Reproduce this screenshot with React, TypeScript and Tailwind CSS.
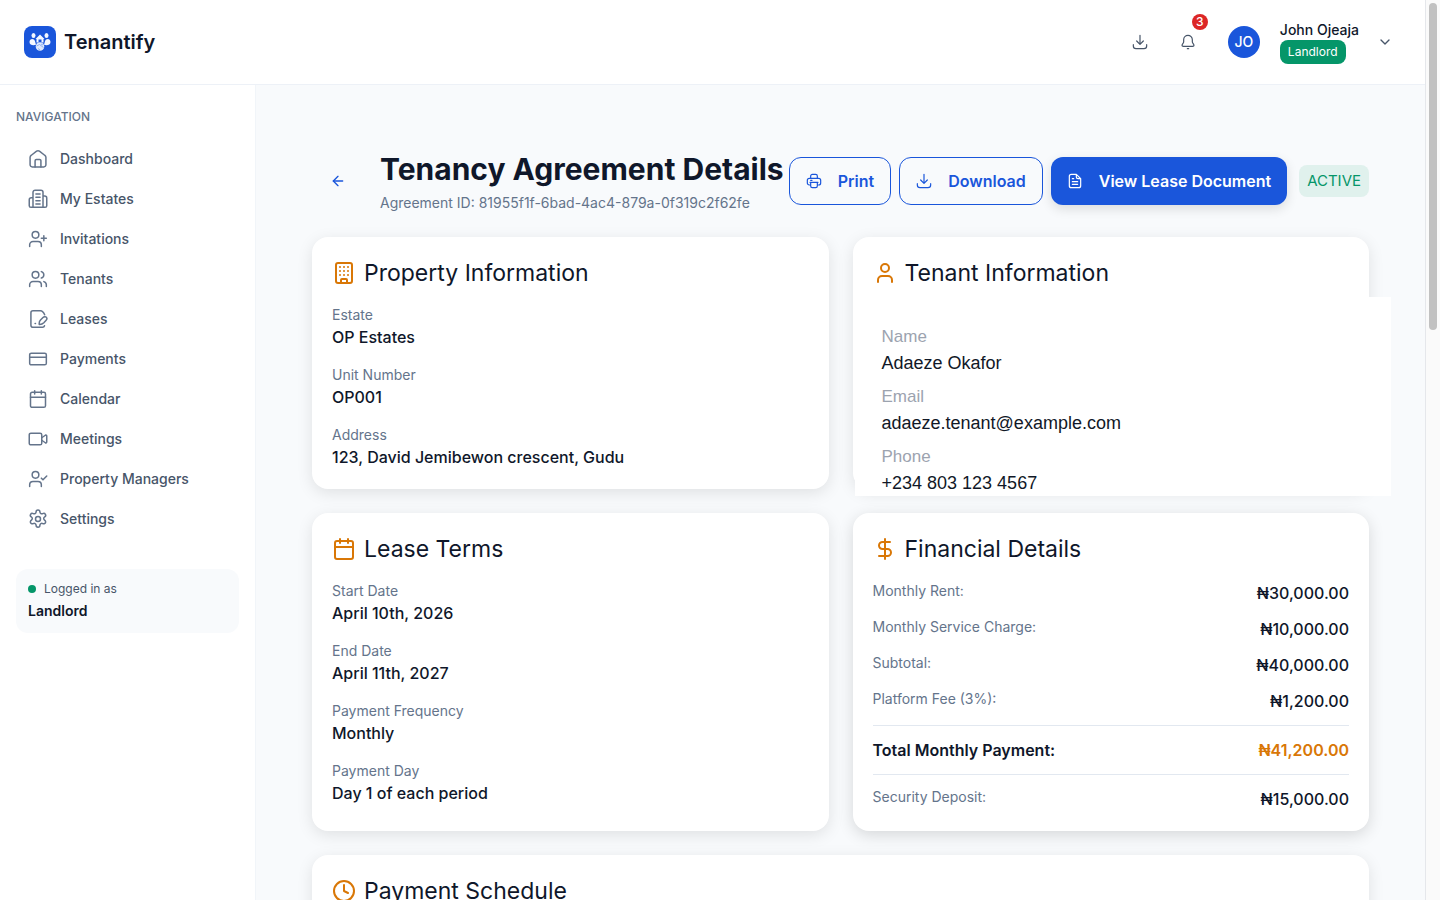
import React from "react";
import { ArrowLeft, Building, Calendar, ChevronDown, Clock, CreditCard, DollarSign, User, UserPlus, Users } from "lucide-react";

interface IconProps {
  size?: number;
  children: React.ReactNode;
  strokeWidth?: number;
}

const Glyph: React.FC<IconProps> = ({ size = 20, strokeWidth = 1.8, children }) => (
  <svg width={size} height={size} viewBox="0 0 24 24" fill="none" stroke="currentColor" strokeWidth={strokeWidth} strokeLinecap="round" strokeLinejoin="round" className="shrink-0" aria-hidden="true">
    {children}
  </svg>
);

const DownloadIcon = () => (
  <Glyph size={16}>
    <path d="M12 2v13M7 10.5l5 5 5-5M2 16v2a4 4 0 0 0 4 4h12a4 4 0 0 0 4-4v-2" />
  </Glyph>
);

const navItems = [
  {
    label: "Dashboard",
    icon: (
      <Glyph>
        <path d="M2.500 10a3 3 0 0 1 1.500-2.500l6.300-4.900a3 3 0 0 1 3.400 0L20 7.500a3 3 0 0 1 1.500 2.500V19a2.500 2.500 0 0 1-2.500 2.500H5A2.500 2.500 0 0 1 2.500 19z" />
        <path d="M8.500 21.500V14a1.500 1.500 0 0 1 1.500-1.500h4a1.500 1.500 0 0 1 1.500 1.500v7.500" />
      </Glyph>
    ),
  },
  {
    label: "My Estates",
    icon: (
      <Glyph>
        <path d="M6 22V4a2.500 2.500 0 0 1 2.500-2.500h7A2.500 2.500 0 0 1 18 4v18M6 10.500H4A2.500 2.500 0 0 0 1.500 13v7A2 2 0 0 0 3.500 22h17a2 2 0 0 0 2-2v-9a2.500 2.500 0 0 0-2.500-2.500h-2M9.500 6h5M9.500 10h5M9.500 14h5M9.500 18h5" />
      </Glyph>
    ),
  },
  { label: "Invitations", icon: <UserPlus size={20} strokeWidth={1.8} /> },
  { label: "Tenants", icon: <Users size={20} strokeWidth={1.8} /> },
  {
    label: "Leases",
    icon: (
      <Glyph>
        <path d="M20 7c-1-2.500-3-5-5-5H6a2.500 2.500 0 0 0-2.500 2.500v15A2.500 2.500 0 0 0 6 22h11.500a2.500 2.500 0 0 0 2.300-1.800" />
        <path d="M13.500 18.500c-.3-2 .2-3.800 1.500-5.200l3-3c1.300-1.300 3-1.500 4-.5s.7 2.700-.5 4l-2.500 2.700c-1.500 1.500-3.500 2.100-5.500 2zM8.500 17.500h.5" />
      </Glyph>
    ),
  },
  { label: "Payments", icon: <CreditCard size={20} strokeWidth={1.8} /> },
  { label: "Calendar", icon: <Calendar size={20} strokeWidth={1.8} /> },
  {
    label: "Meetings",
    icon: (
      <Glyph>
        <rect x="1.500" y="5" width="15" height="14" rx="2" />
        <path d="M16.500 10.500 20.800 7.500a1.100 1.100 0 0 1 1.700.9v7.200a1.100 1.100 0 0 1-1.700.9l-4.300-3" />
      </Glyph>
    ),
  },
  {
    label: "Property Managers",
    icon: (
      <Glyph>
        <circle cx="9" cy="7" r="4" />
        <path d="M2 21v-2a4 4 0 0 1 4-4h6a4 4 0 0 1 4 4v2M16 11l2 2 4.500-4.500" />
      </Glyph>
    ),
  },
  {
    label: "Settings",
    icon: (
      <Glyph>
        <circle cx="12" cy="12" r="3" />
        <path d="M9.700 3.500a2.300 2.300 0 0 1 4.600 0 2.300 2.300 0 0 0 3.400 2 2.300 2.300 0 0 1 2.300 4 2.300 2.300 0 0 0 0 4 2.300 2.300 0 0 1-2.300 4 2.300 2.300 0 0 0-3.400 2 2.300 2.300 0 0 1-4.600 0 2.300 2.300 0 0 0-3.400-2 2.300 2.300 0 0 1-2.300-4 2.300 2.300 0 0 0 0-4 2.300 2.300 0 0 1 2.300-4 2.300 2.300 0 0 0 3.400-2z" />
      </Glyph>
    ),
  },
];

const Logo = () => (
  <svg width="32" height="32" viewBox="0 0 32 32" aria-hidden="true">
    <rect width="32" height="32" rx="8" fill="#1a56db" />
    <g fill="#f4f8ff">
      <ellipse cx="9.500" cy="9.500" rx="2" ry="2.500" />
      <ellipse cx="22.500" cy="9.500" rx="2" ry="2.500" />
      <path d="M16 8.500l4.500 4.500h-1v3.500h-2V13.500h-3v3h-2V13h-1z" />
      <path d="M5.500 16c0-3.500 4.500-4 5.500-.8l1 3.600c-3 1-6.500.2-6.500-2.800zM26.500 16c0-3.500-4.500-4-5.500-.8l-1 3.600c3 1 6.500.2 6.500-2.800z" />
      <circle cx="16" cy="20.500" r="4.300" fill="#dce8fd" />
    </g>
    <path d="M12.500 20l3-1.500 4 3M14 22.500l2 1.500M17 18l2 1" fill="none" stroke="#7da2ee" strokeWidth="0.8" />
  </svg>
);

interface CardProps {
  icon: React.ReactNode;
  title: string;
  raised?: boolean;
  children?: React.ReactNode;
}

const Card: React.FC<CardProps> = ({ icon, title, raised, children }) => (
  <section className={`relative rounded-2xl bg-white p-5 ${raised ? "shadow-[0_4px_16px_rgba(0,0,0,0.14)]" : "shadow-[0_4px_16px_rgba(0,0,0,0.10)]"}`}>
    <h2 className="mb-4 flex items-center gap-2 text-[23px] leading-8 text-[#0f172a]">
      <span className="text-[#d97706]">{icon}</span>
      {title}
    </h2>
    {children}
  </section>
);

interface Field {
  label: string;
  value: string;
}

const FieldList: React.FC<{ fields: Field[] }> = ({ fields }) => (
  <dl className="flex flex-col gap-4">
    {fields.map((field) => (
      <div key={field.label}>
        <dt className="text-sm text-[#64748b]">{field.label}</dt>
        <dd className="text-base font-medium text-[#0f172a]">{field.value}</dd>
      </div>
    ))}
  </dl>
);

const Amount: React.FC<Field> = ({ label, value }) => (
  <div className="flex items-start justify-between">
    <dt className="text-sm text-[#64748b]">{label}</dt>
    <dd className="text-base font-medium text-[#0f172a]">{value}</dd>
  </div>
);

const property: Field[] = [
  { label: "Estate", value: "OP Estates" },
  { label: "Unit Number", value: "OP001" },
  { label: "Address", value: "123, David Jemibewon crescent, Gudu" },
];

const tenant: Field[] = [
  { label: "Name", value: "Adaeze Okafor" },
  { label: "Email", value: "adaeze.tenant@example.com" },
  { label: "Phone", value: "+234 803 123 4567" },
];

const lease: Field[] = [
  { label: "Start Date", value: "April 10th, 2026" },
  { label: "End Date", value: "April 11th, 2027" },
  { label: "Payment Frequency", value: "Monthly" },
  { label: "Payment Day", value: "Day 1 of each period" },
];

const charges: Field[] = [
  { label: "Monthly Rent:", value: "₦30,000.00" },
  { label: "Monthly Service Charge:", value: "₦10,000.00" },
  { label: "Subtotal:", value: "₦40,000.00" },
  { label: "Platform Fee (3%):", value: "₦1,200.00" },
];

const Header = () => (
  <header className="flex h-[85px] shrink-0 items-center justify-between border-b border-[#edf1f7] bg-white pr-3 pl-6">
    <a href="#" className="flex items-center gap-2 text-xl font-semibold text-[#0f172a]">
      <Logo />
      Tenantify
    </a>
    <div className="flex items-center text-[#475569]">
      <button aria-label="Download" className="flex size-12 items-center justify-center">
        <DownloadIcon />
      </button>
      <button aria-label="Notifications" className="relative flex size-12 items-center justify-center">
        <Glyph size={16}>
          <path d="M12 2a6.500 6.500 0 0 0-6.500 6.500V12c0 1.500-2.500 3.500-2.500 5 0 1 .8 1.500 2 1.500h14c1.200 0 2-.5 2-1.500 0-1.500-2.500-3.500-2.500-5V8.500A6.500 6.500 0 0 0 12 2zM11 22h2" />
        </Glyph>
        <span className="absolute -top-1 right-1 flex size-4 items-center justify-center rounded-full bg-[#dc2626] text-xs font-medium text-white">3</span>
      </button>
      <button className="ml-4 flex items-center text-left">
        <span className="flex size-8 items-center justify-center rounded-full bg-[#1a56db] text-sm font-medium text-white">JO</span>
        <span className="ml-5 flex flex-col items-start">
          <span className="text-sm font-medium text-[#0f172a]">John Ojeaja</span>
          <span className="rounded-lg bg-[#059669] px-2 py-1 text-xs text-white">Landlord</span>
        </span>
        <span className="mr-5 ml-[18px]">
          <ChevronDown size={16} />
        </span>
      </button>
    </div>
  </header>
);

const Sidebar = () => (
  <aside className="w-64 shrink-0 border-r border-[#f1f5f9] bg-white px-4 pt-6">
    <h2 className="mb-[14px] text-xs leading-4 font-medium text-[#64748b]">NAVIGATION</h2>
    <nav className="flex flex-col">
      {navItems.map((item) => (
        <a key={item.label} href="#" className="flex h-10 items-center gap-3 px-3 text-sm font-medium text-[#475569]">
          <span className="text-[#64748b]">{item.icon}</span>
          {item.label}
        </a>
      ))}
    </nav>
    <div className="mt-[30px] rounded-xl bg-[#f8fafc] p-3">
      <p className="flex items-center gap-2 text-xs text-[#475569]">
        <span className="size-2 rounded-full bg-[#059669]" />
        Logged in as
      </p>
      <p className="mt-1 text-sm font-semibold text-[#0f172a]">Landlord</p>
    </div>
  </aside>
);

const TitleBar = () => (
  <div className="mb-6 flex items-center justify-between whitespace-nowrap">
    <div className="flex items-center gap-4">
      <button aria-label="Back" className="flex h-12 w-[52px] items-center justify-center text-[#1a56db]">
        <ArrowLeft size={16} />
      </button>
      <div>
        <h1 className="mb-1 text-3xl leading-10 font-bold text-[#0f172a]">Tenancy Agreement Details</h1>
        <p className="text-sm text-[#64748b]">Agreement ID: 81955f1f-6bad-4ac4-879a-0f319c2f62fe</p>
      </div>
    </div>
    <div className="flex items-center gap-2 font-semibold text-[#1a56db]">
      <button className="flex h-12 items-center gap-4 rounded-xl border border-[#1a56db] px-4">
        <Glyph size={16}>
          <path d="M7 8V4.500A2.500 2.500 0 0 1 9.500 2h5A2.500 2.500 0 0 1 17 4.500V8M7 18H5a3 3 0 0 1-3-3v-4a3 3 0 0 1 3-3h14a3 3 0 0 1 3 3v4a3 3 0 0 1-3 3h-2M6 14h12M7 14v5.500A2.500 2.500 0 0 0 9.500 22h5a2.500 2.500 0 0 0 2.500-2.500V14M7 11h2" />
        </Glyph>
        Print
      </button>
      <button className="flex h-12 items-center gap-4 rounded-xl border border-[#1a56db] px-4">
        <DownloadIcon />
        Download
      </button>
      <button className="flex h-12 items-center gap-4 rounded-xl bg-[#1a56db] px-4 text-white shadow-[0_4px_12px_rgba(0,0,0,0.12)]">
        <Glyph size={16}>
          <path d="M14 2H6.500A3 3 0 0 0 3.500 5v14a3 3 0 0 0 3 3h11a3 3 0 0 0 3-3V8.500zM14 2v4a2.500 2.500 0 0 0 2.500 2.500h4M8 8.500h2M8 13h8M8 17h8" />
        </Glyph>
        View Lease Document
      </button>
      <span className="ml-1 rounded-lg bg-[#e0f1ed] px-2 py-1 text-[15px] leading-6 font-normal text-[#059669]">ACTIVE</span>
    </div>
  </div>
);

const App = () => (
  <div className="flex h-screen overflow-hidden bg-[#f8fafc] font-['Inter','Open_Sans',sans-serif]">
    <div className="flex min-w-0 flex-1 flex-col">
      <Header />
      <div className="flex min-h-0 flex-1">
        <Sidebar />
        <main className="min-w-0 flex-1 overflow-hidden px-14 pt-16">
          <TitleBar />
          <div className="grid grid-cols-2 gap-6">
            <Card icon={<Building size={24} />} title="Property Information">
              <FieldList fields={property} />
            </Card>
            <Card icon={<User size={24} />} title="Tenant Information">
              <dl className="absolute top-[60px] -right-[22px] left-[2px] flex h-[199px] flex-col gap-2 bg-white px-[27px] pt-[27px] font-['Liberation_Sans',Arial,sans-serif]">
                {tenant.map((field) => (
                  <div key={field.label}>
                    <dt className="text-[17px] leading-[26px] text-[#9ca3af]">{field.label}</dt>
                    <dd className="text-lg leading-[26px] text-[#111827]">{field.value}</dd>
                  </div>
                ))}
              </dl>
            </Card>
            <Card icon={<Calendar size={24} />} title="Lease Terms">
              <FieldList fields={lease} />
            </Card>
            <Card icon={<DollarSign size={24} />} title="Financial Details" raised>
              <dl className="flex flex-col gap-3">
                {charges.map((charge) => (
                  <Amount key={charge.label} {...charge} />
                ))}
                <div className="flex justify-between border-y border-[#e2e8f0] py-3 font-semibold text-[#0f172a]">
                  <dt>Total Monthly Payment:</dt>
                  <dd className="text-[#d97706]">₦41,200.00</dd>
                </div>
                <Amount label="Security Deposit:" value="₦15,000.00" />
              </dl>
            </Card>
            <div className="col-span-2">
              <Card icon={<Clock size={24} />} title="Payment Schedule" />
            </div>
          </div>
        </main>
      </div>
    </div>
    <div className="flex w-[15px] shrink-0 justify-center border-l border-[#e5e7eb] bg-[#fafafa] pt-[3px]" aria-hidden="true">
      <div className="h-[327px] w-2 rounded-full bg-[#c1c1c1]" />
    </div>
  </div>
);

export default App;
